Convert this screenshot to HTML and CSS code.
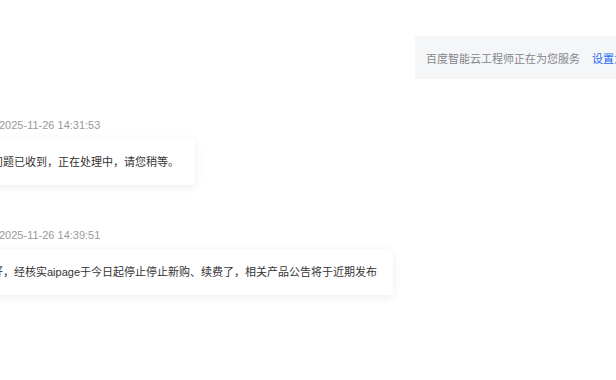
FILE: index.html
```html
<!DOCTYPE html>
<html lang="zh-CN">
<head>
<meta charset="utf-8">
<title>工单对话</title>
<link rel="stylesheet" href="styles.css">
</head>
<body>
<div class="page">
  <div class="notice-row">
    <div class="notice">
      <span class="notice-text">百度智能云工程师正在为您服务</span>
      <a class="notice-link" href="#">设置为常用工程师</a>
    </div>
  </div>
  <div class="chat">
    <div class="msg">
      <div class="meta"><span class="name">工程师</span><span class="time">2025-11-26 14:31:53</span></div>
      <div class="bubble">您的问题已收到，正在处理中，请您稍等。</div>
    </div>
    <div class="msg">
      <div class="meta"><span class="name">工程师</span><span class="time">2025-11-26 14:39:51</span></div>
      <div class="bubble">亲您好，经核实aipage于今日起停止停止新购、续费了，相关产品公告将于近期发布</div>
    </div>
  </div>
</div>
</body>
</html>
```
FILE: styles.css
```css
html, body {
  margin: 0;
  padding: 0;
  background: #ffffff;
  overflow: hidden;
}
.page {
  width: 616px;
  height: 380px;
  overflow: hidden;
  font-family: "Liberation Sans", "Noto Sans CJK SC", sans-serif;
  font-size: 11px;
}
.notice-row {
  display: flex;
  padding: 36px 0 0 415px;
}
.notice {
  flex: none;
  display: flex;
  align-items: center;
  gap: 12px;
  height: 43px;
  padding: 0 16px 0 11px;
  background: #f5f6f8;
  white-space: nowrap;
}
.notice-text {
  color: #84868c;
}
.notice-link {
  color: #2468f2;
  text-decoration: none;
}
.chat {
  margin: 38px 0 0 -46px;
  display: flex;
  flex-direction: column;
  gap: 42px;
  align-items: flex-start;
}
.msg {
  display: flex;
  flex-direction: column;
  align-items: flex-start;
  gap: 6px;
}
.meta {
  display: flex;
  gap: 12px;
  line-height: 16px;
  color: #999999;
  white-space: nowrap;
}
.bubble {
  background: #ffffff;
  color: #333333;
  line-height: 18px;
  padding: 14px 16px;
  border-radius: 4px;
  box-shadow: 0 2px 10px rgba(0, 0, 0, 0.08);
  white-space: nowrap;
}
```
